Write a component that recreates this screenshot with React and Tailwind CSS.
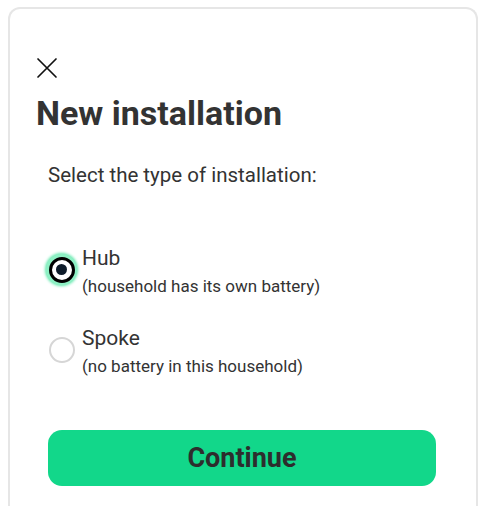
import React, { useState } from "react";

const options = [
  { id: "hub", label: "Hub", note: "(household has its own battery)" },
  { id: "spoke", label: "Spoke", note: "(no battery in this household)" },
];

const Radio = ({ checked }) =>
  checked ? (
    <span className="flex h-[31px] w-[31px] shrink-0 items-center justify-center rounded-full bg-[#8ef0c4] shadow-[0_0_3px_1px_#5ee8ab]">
      <span className="flex h-[26px] w-[26px] items-center justify-center rounded-full border-[3px] border-black bg-white">
        <span className="h-[11px] w-[11px] rounded-full bg-[#0d1b2a]" />
      </span>
    </span>
  ) : (
    <span className="flex h-[31px] w-[31px] shrink-0 items-center justify-center">
      <span className="h-[26px] w-[26px] rounded-full border-2 border-[#d6d6d6] bg-white" />
    </span>
  );

export default function App() {
  const [type, setType] = useState("hub");

  return (
    <div className="min-h-[506px] bg-white px-2 pt-[7px] font-['Roboto',sans-serif]">
      <div className="h-[520px] rounded-t-[12px] border-x-2 border-t-2 border-[#e6e6e6] px-[26px] pt-[48px]">
        <button className="block text-[#111]" aria-label="Close">
          <svg width="22" height="22" viewBox="0 0 22 22" fill="none" stroke="currentColor" strokeWidth="1.7" strokeLinecap="round">
            <path d="M2 2 L20 20 M20 2 L2 20" />
          </svg>
        </button>
        <h1 className="mt-[14px] text-[34px] leading-[40px] font-bold text-[#333]">New installation</h1>

        <div className="px-3">
          <p className="mt-[28px] text-[20.5px] leading-[28px] text-[#333]">Select the type of installation:</p>

          <div className="mt-[57px] flex flex-col gap-[29px]">
            {options.map((o) => (
              <label key={o.id} className="flex cursor-pointer items-start gap-[5px]" onClick={() => setType(o.id)}>
                <span className="-ml-[2px] mt-[8px]">
                  <Radio checked={type === o.id} />
                </span>
                <span className="flex flex-col">
                  <span className="text-[21px] leading-[24px] text-[#333]">{o.label}</span>
                  <span className="mt-[5px] text-[17px] leading-[22px] text-[#333]">{o.note}</span>
                </span>
              </label>
            ))}
          </div>

          <button className="mt-[53px] flex h-[56px] w-[388px] items-center justify-center rounded-[14px] bg-[#12d78a] text-[27px] font-bold text-[#2d2d2d]">
            Continue
          </button>
        </div>
      </div>
    </div>
  );
}
